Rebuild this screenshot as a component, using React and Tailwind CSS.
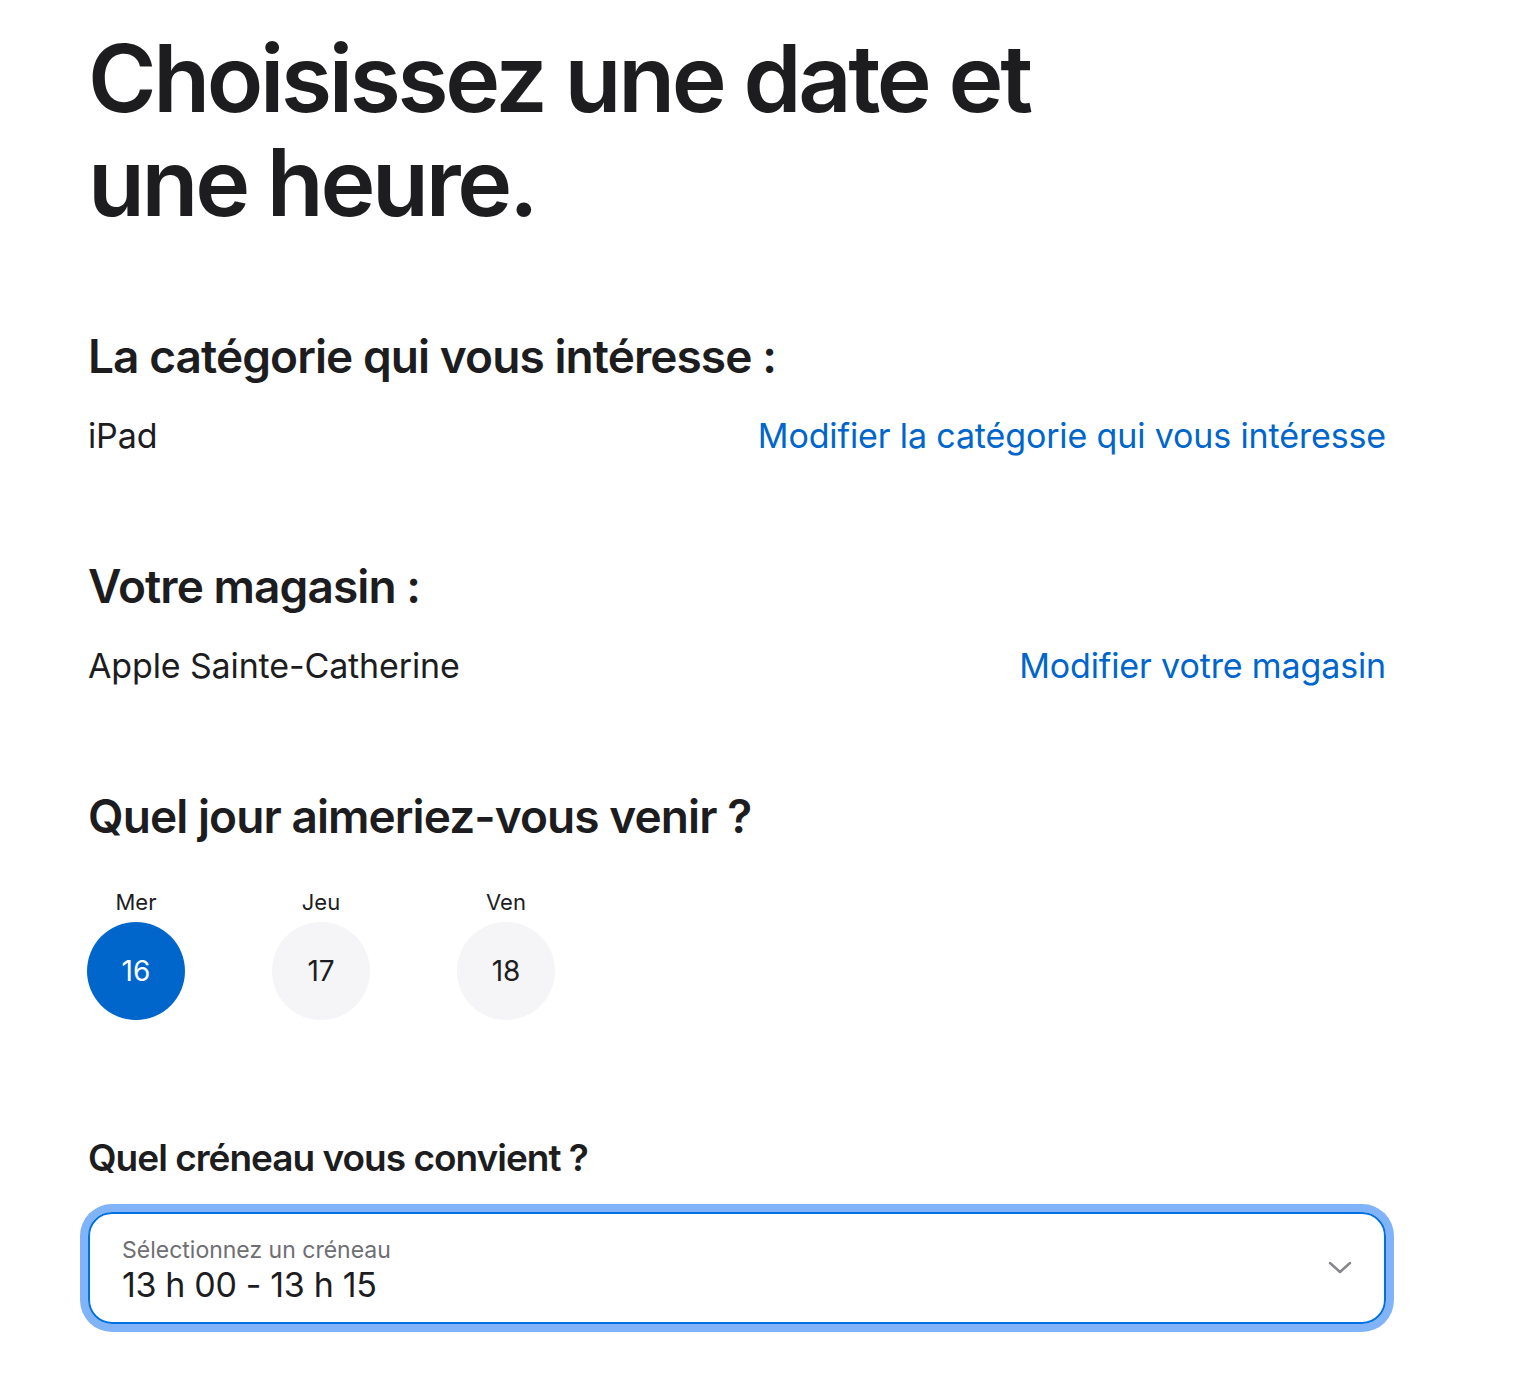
export default function App() {
  const days = [
    { label: "Mer", num: "16", selected: true },
    { label: "Jeu", num: "17" },
    { label: "Ven", num: "18" },
  ];
  return (
    <div className="min-h-[1384px] bg-white font-['Inter',sans-serif] text-[#1d1d1f]">
      <div className="ml-[88px] w-[1298px] pt-[26px]">
        <h1 className="text-[93px] leading-[104px] font-semibold tracking-[-0.036em]">
          Choisissez une date et
          <br />
          une heure.
        </h1>

        <section className="mt-[94px]">
          <h2 className="text-[46px] leading-[56px] font-semibold tracking-[-0.02em]">
            La catégorie qui vous intéresse :
          </h2>
          <div className="mt-[32px] flex items-baseline justify-between text-[34px] leading-[40px] tracking-[-0.004em]">
            <span>iPad</span>
            <a className="text-[#0066cc]" href="#">
              Modifier la catégorie qui vous intéresse
            </a>
          </div>
        </section>

        <section className="mt-[102px]">
          <h2 className="text-[46px] leading-[56px] font-semibold tracking-[-0.02em]">
            Votre magasin :
          </h2>
          <div className="mt-[32px] flex items-baseline justify-between text-[34px] leading-[40px] tracking-[-0.004em]">
            <span>Apple Sainte-Catherine</span>
            <a className="text-[#0066cc]" href="#">
              Modifier votre magasin
            </a>
          </div>
        </section>

        <section className="mt-[102px]">
          <h2 className="text-[46px] leading-[56px] font-semibold tracking-[-0.02em]">
            Quel jour aimeriez-vous venir ?
          </h2>
          <div className="mt-[44px] flex gap-[87px] -ml-px">
            {days.map((d) => (
              <div key={d.num} className="flex w-[98px] flex-col items-center">
                <span className="text-[22px] leading-[28px]">{d.label}</span>
                <div
                  className={
                    d.selected
                      ? "mt-[6px] flex h-[98px] w-[98px] items-center justify-center rounded-full bg-[#0066cc] text-[28px] text-white"
                      : "mt-[6px] flex h-[98px] w-[98px] items-center justify-center rounded-full bg-[#f5f5f7] text-[28px] text-[#1d1d1f]"
                  }
                >
                  {d.num}
                </div>
              </div>
            ))}
          </div>
        </section>

        <section className="mt-[114px]">
          <h3 className="text-[37px] leading-[48px] font-semibold tracking-[-0.027em]">
            Quel créneau vous convient ?
          </h3>
          <div className="mt-[30px] flex h-[112px] items-center justify-between rounded-[24px] border-2 border-[#0071e3] pl-[32px] pr-[32px] shadow-[0_0_0_8px_#80b3f7]">
            <div className="flex flex-col pt-[4px]">
              <span className="text-[23px] leading-[30px] text-[#6e6e73]">
                Sélectionnez un créneau
              </span>
              <span className="text-[34px] leading-[40px] tracking-[-0.01em]">13 h 00 - 13 h 15</span>
            </div>
            <svg width="24" height="14" viewBox="0 0 24 14" fill="none">
              <path d="M2 2 L12 11 L22 2" stroke="#86868b" strokeWidth="2.5" strokeLinecap="round" strokeLinejoin="round" />
            </svg>
          </div>
        </section>
      </div>
    </div>
  );
}
